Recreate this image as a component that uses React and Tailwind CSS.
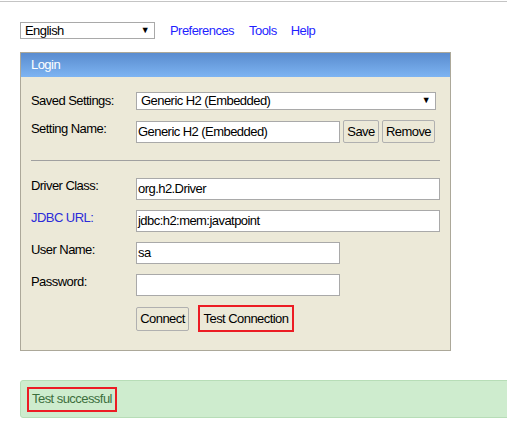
import React from 'react';

const Field = ({ label, value = '', wide, link }) => (
  <div className="flex items-start mt-[10px]">
    <label className={`w-[105px] leading-[15px] ${link ? 'text-[#2b2bd8]' : 'text-black'}`}>{label}</label>
    <div
      className={`h-[22px] border border-[#a9a9a9] bg-white flex items-center pl-[1px] ${wide ? 'w-[304px]' : 'w-[204px]'}`}
    >
      {value}
    </div>
  </div>
);

const App = () => {
  return (
    <div
      className="min-h-screen bg-white text-[13px] tracking-[-0.55px] text-black overflow-hidden"
      style={{ fontFamily: '"Liberation Sans", Arial, sans-serif' }}
    >
      <div className="mt-px h-px bg-[#c4c4c4]" />

      <div className="pl-[20px]">
        {/* top bar */}
        <div className="mt-[20px] flex items-center h-[17px]">
          <div className="w-[135px] h-[17px] border border-[#a9a9a9] flex items-center justify-between pl-[4px] pr-[5px]">
            <span>English</span>
            <span className="text-[9px]">▼</span>
          </div>
          <a className="ml-[15px] text-[#1f1fff]">Preferences</a>
          <a className="ml-[15px] text-[#1f1fff]">Tools</a>
          <a className="ml-[14px] text-[#1f1fff]">Help</a>
        </div>

        {/* login panel */}
        <div className="mt-[13px] w-[431px] border border-[#aca899] bg-[#ece9d8]">
          <div className="h-[24px] bg-gradient-to-b from-[#5a8ccf] to-[#7db4f2] text-white pl-[10px] flex items-center">
            Login
          </div>
          <div className="pl-[10px] pt-[15px] pb-[18px] flex flex-col">
            <div className="flex items-start">
              <label className="w-[105px] leading-[15px] pt-px">Saved Settings:</label>
              <div className="w-[300px] h-[18px] border border-[#a9a9a9] bg-white flex items-center justify-between pl-[4px] pr-[5px]">
                <span>Generic H2 (Embedded)</span>
                <span className="text-[9px]">▼</span>
              </div>
            </div>

            <div className="flex items-start mt-[10px]">
              <label className="w-[105px] leading-[15px] pt-[1px]">Setting Name:</label>
              <div className="w-[204px] h-[22px] mt-px border border-[#a9a9a9] bg-white flex items-center pl-[1px]">
                Generic H2 (Embedded)
              </div>
              <button className="ml-[3px] w-[36px] h-[23px] border border-[#b0b0b0] rounded-[2px] bg-[#ece9d8]">Save</button>
              <button className="ml-[3px] w-[53px] h-[23px] border border-[#b0b0b0] rounded-[2px] bg-[#ece9d8]">Remove</button>
            </div>

            <div className="mt-[17px] w-[409px] h-px bg-[#a0a0a0]" />

            <div className="mt-[7px] flex flex-col">
              <Field label="Driver Class:" value="org.h2.Driver" wide />
              <Field label="JDBC URL:" value="jdbc:h2:mem:javatpoint" wide link />
              <Field label="User Name:" value="sa" />
              <Field label="Password:" />
            </div>

            <div className="flex items-center mt-[9px] pl-[105px]">
              <button className="w-[53px] h-[24px] border border-[#b0b0b0] rounded-[2px] bg-[#ece9d8]">Connect</button>
              <button className="ml-[9px] w-[96px] h-[27px] border-2 border-[#ec1c24] bg-[#ece9d8]">Test Connection</button>
            </div>
          </div>
        </div>

        {/* result */}
        <div className="mt-[29px] h-[38px] w-[500px] border border-[#b7ddb7] rounded-[3px] bg-[#ceecce] flex items-center pl-[6px]">
          <div className="h-[25px] border-2 border-[#ec1c24] flex items-center px-[3px] text-[#3c6e3c]">
            Test successful
          </div>
        </div>
      </div>
    </div>
  );
};

export default App;
